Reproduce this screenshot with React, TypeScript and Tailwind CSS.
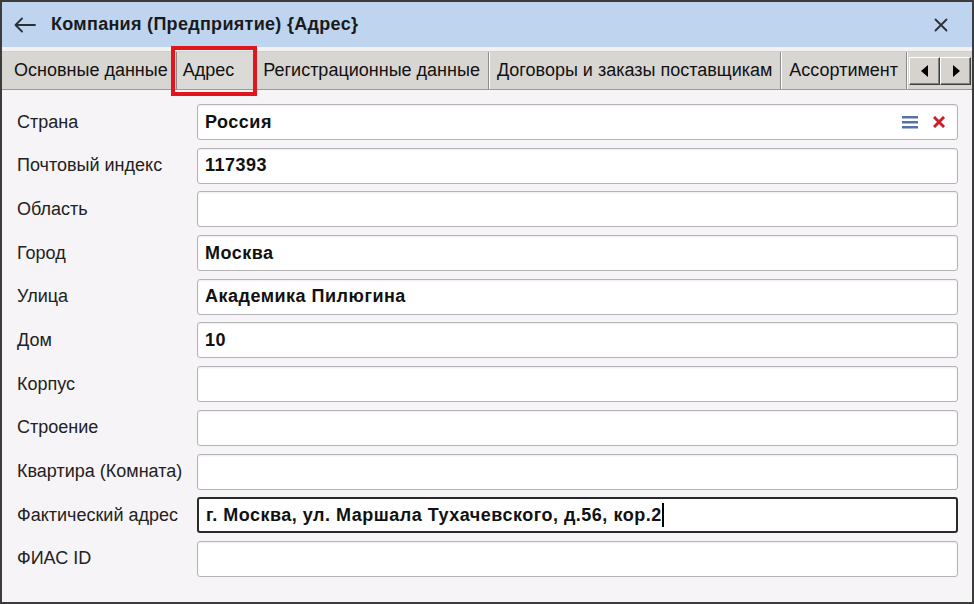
import { useState } from 'react';

type Field = {
  label: string;
  value?: string;
  focused?: boolean;
  picker?: boolean;
};

const FIELDS: Field[] = [
  { label: 'Страна', value: 'Россия', picker: true },
  { label: 'Почтовый индекс', value: '117393' },
  { label: 'Область' },
  { label: 'Город', value: 'Москва' },
  { label: 'Улица', value: 'Академика Пилюгина' },
  { label: 'Дом', value: '10' },
  { label: 'Корпус' },
  { label: 'Строение' },
  { label: 'Квартира (Комната)' },
  { label: 'Фактический адрес', value: 'г. Москва, ул. Маршала Тухачевского, д.56, кор.2', focused: true },
  { label: 'ФИАС ID' },
];

const TABS = ['Основные данные', 'Адрес', 'Регистрационные данные', 'Договоры и заказы поставщикам', 'Ассортимент'];

function BackArrow() {
  return (
    <svg width="22" height="16" viewBox="0 0 22 16" fill="none" stroke="#2b2f36" strokeWidth="1.8" strokeLinecap="round" strokeLinejoin="round">
      <path d="M21 8H2" />
      <path d="M8 1.5 1.5 8 8 14.5" />
    </svg>
  );
}

function CloseIcon() {
  return (
    <svg width="14" height="14" viewBox="0 0 14 14" stroke="#2b2f36" strokeWidth="1.8" strokeLinecap="round">
      <path d="M1.5 1.5l11 11M12.5 1.5l-11 11" />
    </svg>
  );
}

function ScrollButton({ dir }: { dir: 'left' | 'right' }) {
  return (
    <div className="w-[31px] h-[28px] flex items-center justify-center bg-[#d6d3ce] border border-t-white border-l-white border-r-[#404040] border-b-[#404040] shadow-[inset_-1px_-1px_0_#808080]">
      <svg width="8" height="12" viewBox="0 0 8 12" fill="#000">
        {dir === 'left' ? <path d="M7 0v12L0 6z" /> : <path d="M1 0v12l7-6z" />}
      </svg>
    </div>
  );
}

function Input({ field }: { field: Field }) {
  const border = field.focused
    ? 'border-2 border-[#2a2a2a]'
    : 'border border-[#b4b4b8] shadow-[inset_0_1px_2px_rgba(0,0,0,0.08)]';
  return (
    <div className={`flex-1 h-[36px] rounded-[3px] bg-white flex items-center pl-[7px] pr-[12px] ${border}`}>
      <span className="font-bold text-[18px] tracking-[0.5px] text-[#111] whitespace-nowrap">{field.value}</span>
      {field.focused ? <span className="w-[2px] h-[24px] bg-black" /> : null}
      {field.picker ? (
        <div className="ml-auto flex items-center gap-[15px]">
          <svg width="16" height="13" viewBox="0 0 16 13" fill="#5672a8">
            <rect x="0" y="0" width="16" height="2.5" />
            <rect x="0" y="5" width="16" height="2.5" />
            <rect x="0" y="10" width="16" height="2.5" />
          </svg>
          <svg width="12" height="12" viewBox="0 0 12 12" stroke="#c8202a" strokeWidth="3" strokeLinecap="square">
            <path d="M2 2l8 8M10 2l-8 8" />
          </svg>
        </div>
      ) : null}
    </div>
  );
}

export default function App() {
  const [active] = useState(1);

  return (
    <div className="w-[974px] h-[604px] overflow-hidden border-2 border-[#3c3c3c] bg-[#f6f4f7] flex flex-col font-['Liberation_Sans',Arial,sans-serif]">
      {/* window header */}
      <div className="h-[45px] shrink-0 bg-[#bed4ef] flex items-center pl-[12px] pr-[24px]">
        <BackArrow />
        <span className="ml-[15px] font-bold text-[18px] tracking-[0.3px] text-[#1a1a1a]">Компания (Предприятие) {'{'}Адрес{'}'}</span>
        <div className="ml-auto">
          <CloseIcon />
        </div>
      </div>
      <div className="h-[5px] shrink-0 bg-[#f2f2f2] border-b border-[#cfcfcf]" />

      {/* tab strip */}
      <div className="h-[38px] shrink-0 bg-[#d8d6d2] flex items-stretch pl-[4px] pr-[1px] border-b border-[#9a9a9a]">
        {TABS.map((tab, i) => (
          <div
            key={tab}
            className={`relative flex items-center text-[18px] text-[#111] whitespace-nowrap border-r border-[#8a8a8a] shadow-[1px_0_0_#ffffff] ${i === active ? 'bg-[#dcdad6] pl-[6px] pr-[20px]' : 'px-[8px]'}`}
          >
            {tab}
            {i === active ? (
              <span className="absolute -left-[6px] -right-[3px] -top-[6px] -bottom-[7px] border-[4px] border-[#e0161e]" />
            ) : null}
          </div>
        ))}
        <div className="ml-auto flex items-center">
          <ScrollButton dir="left" />
          <ScrollButton dir="right" />
        </div>
      </div>

      {/* address form */}
      <div className="flex flex-col gap-[7.7px] pt-[14px] pl-[15px] pr-[14px]">
        {FIELDS.map((f) => (
          <div key={f.label} className="flex items-center">
            <span className="w-[180px] shrink-0 text-[18px] text-[#222] whitespace-nowrap">{f.label}</span>
            <Input field={f} />
          </div>
        ))}
      </div>
    </div>
  );
}
